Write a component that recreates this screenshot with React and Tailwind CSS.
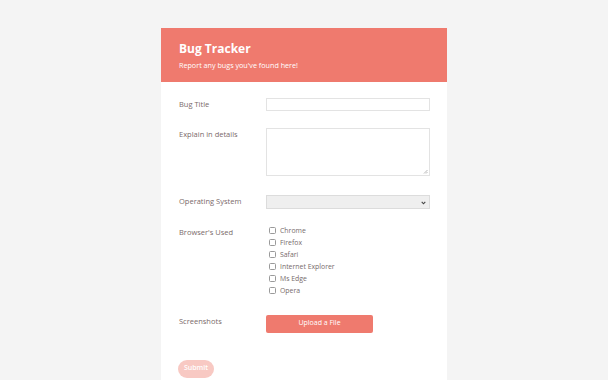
import React from "react";

const browsers = ["Chrome", "Firefox", "Safari", "Internet Explorer", "Ms Edge", "Opera"];

function Row({ label, children, className = "" }) {
  return (
    <div className={"flex " + className}>
      <div className="w-[87px] shrink-0 pt-[1px] text-[7.5px] leading-[10px] text-[#7a6a6a]">{label}</div>
      <div className="flex-1">{children}</div>
    </div>
  );
}

export default function App() {
  return (
    <div
      className="w-[608px] h-[380px] overflow-hidden bg-[#f4f4f4] flex justify-center"
      style={{ fontFamily: '"Open Sans", sans-serif' }}
    >
      <div className="mt-[28px] w-[286px] bg-white flex flex-col">
        <div className="h-[54px] shrink-0 bg-[#ef7a6e] px-[18px] pt-[13px]">
          <div className="text-[12px] font-bold text-white leading-[16px]">Bug Tracker</div>
          <div className="text-[7.2px] text-white mt-[3px] leading-[10px]">Report any bugs you've found here!</div>
        </div>
        <div className="pl-[18px] pr-[17px] pt-[16px]">
          <Row label="Bug Title">
            <div className="h-[13px] border border-[#e3e3e3] bg-white"></div>
          </Row>
          <Row label="Explain in details" className="mt-[17px]">
            <div className="relative h-[48px] border border-[#e3e3e3] bg-white">
              <svg className="absolute right-[1px] bottom-[1px]" width="5" height="5" viewBox="0 0 5 5">
                <path d="M4.5 1 L1 4.5 M4.5 3 L3 4.5" stroke="#999" strokeWidth="0.7" />
              </svg>
            </div>
          </Row>
          <Row label="Operating System" className="mt-[19px]">
            <div className="relative h-[14px] border border-[#dcdcdc] bg-[#efefef]">
              <svg className="absolute right-[3px] top-[4.5px]" width="5" height="4" viewBox="0 0 5 4">
                <path d="M0.7 0.8 L2.5 2.8 L4.3 0.8" stroke="#444" strokeWidth="1.1" fill="none" />
              </svg>
            </div>
          </Row>
          <Row label="Browser's Used" className="mt-[17px]">
            <div className="flex flex-col gap-[5px] pt-[0.5px]">
              {browsers.map((b) => (
                <div key={b} className="flex items-center h-[7px]">
                  <div className="w-[7px] h-[7px] border border-[#9a9a9a] rounded-[1.5px] ml-[3px] mr-[4px]"></div>
                  <span className="text-[6.9px] text-[#776b6b] leading-[7px]">{b}</span>
                </div>
              ))}
            </div>
          </Row>
          <Row label="Screenshots" className="mt-[21px]">
            <div className="w-[107px] h-[18px] rounded-[2px] bg-[#ef7a6e] text-white text-[7px] flex items-center justify-center">
              Upload a File
            </div>
          </Row>
          <div className="mt-[27px] w-[36px] h-[18px] rounded-full bg-[#f8c9c3] text-white text-[7px] font-semibold flex items-center justify-center ml-[-1px]">
            Submit
          </div>
        </div>
      </div>
    </div>
  );
}
